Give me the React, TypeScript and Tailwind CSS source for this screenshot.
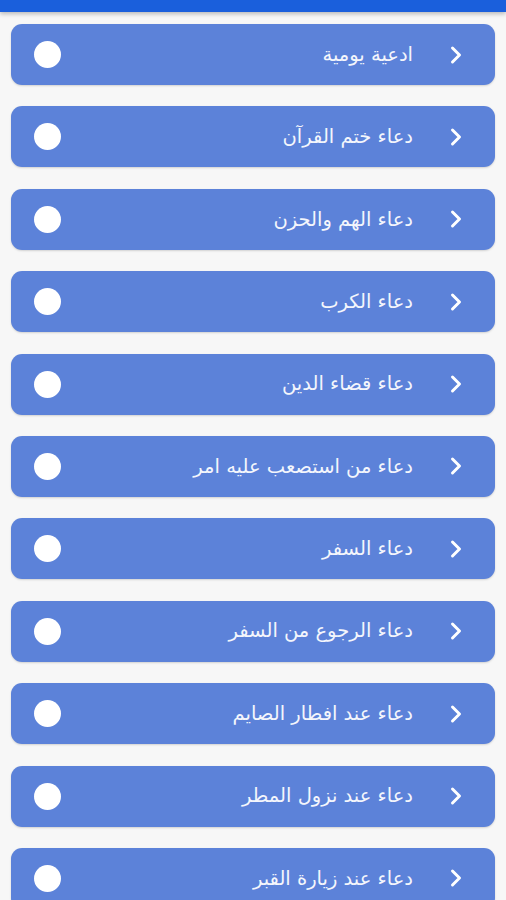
import React from 'react';

const items = [
  'ادعية يومية',
  'دعاء ختم القرآن',
  'دعاء الهم والحزن',
  'دعاء الكرب',
  'دعاء قضاء الدين',
  'دعاء من استصعب عليه امر',
  'دعاء السفر',
  'دعاء الرجوع من السفر',
  'دعاء عند افطار الصايم',
  'دعاء عند نزول المطر',
  'دعاء عند زيارة القبر',
];

function Chevron() {
  return (
    <svg width="16" height="20" viewBox="0 0 16 20" fill="none">
      <path d="M4.5 3 L11.5 10 L4.5 17" stroke="white" strokeWidth="3" strokeLinecap="round" strokeLinejoin="round" />
    </svg>
  );
}

export default function App() {
  return (
    <div className="h-[900px] w-[506px] overflow-hidden bg-[#f7f7f7]" style={{ fontFamily: '"DejaVu Sans", sans-serif' }}>
      <div className="relative z-10 h-3 bg-[#1a5fdc] shadow-[0_2px_4px_rgba(0,0,0,0.25)]" />
      <div className="flex flex-col gap-[21.4px] px-[11px] pt-3">
        {items.map((t) => (
          <div key={t} className="flex h-[61px] shrink-0 items-center rounded-[11px] bg-[#5c82d9] pl-[23px] pr-[31px] shadow-[0_1px_2px_rgba(0,0,0,0.15)]">
            <div className="h-[27px] w-[27px] rounded-full bg-white" />
            <div dir="rtl" className="mr-[35px] flex-1 text-[19.5px] leading-none text-[#f4f6fc]">{t}</div>
            <Chevron />
          </div>
        ))}
      </div>
    </div>
  );
}
